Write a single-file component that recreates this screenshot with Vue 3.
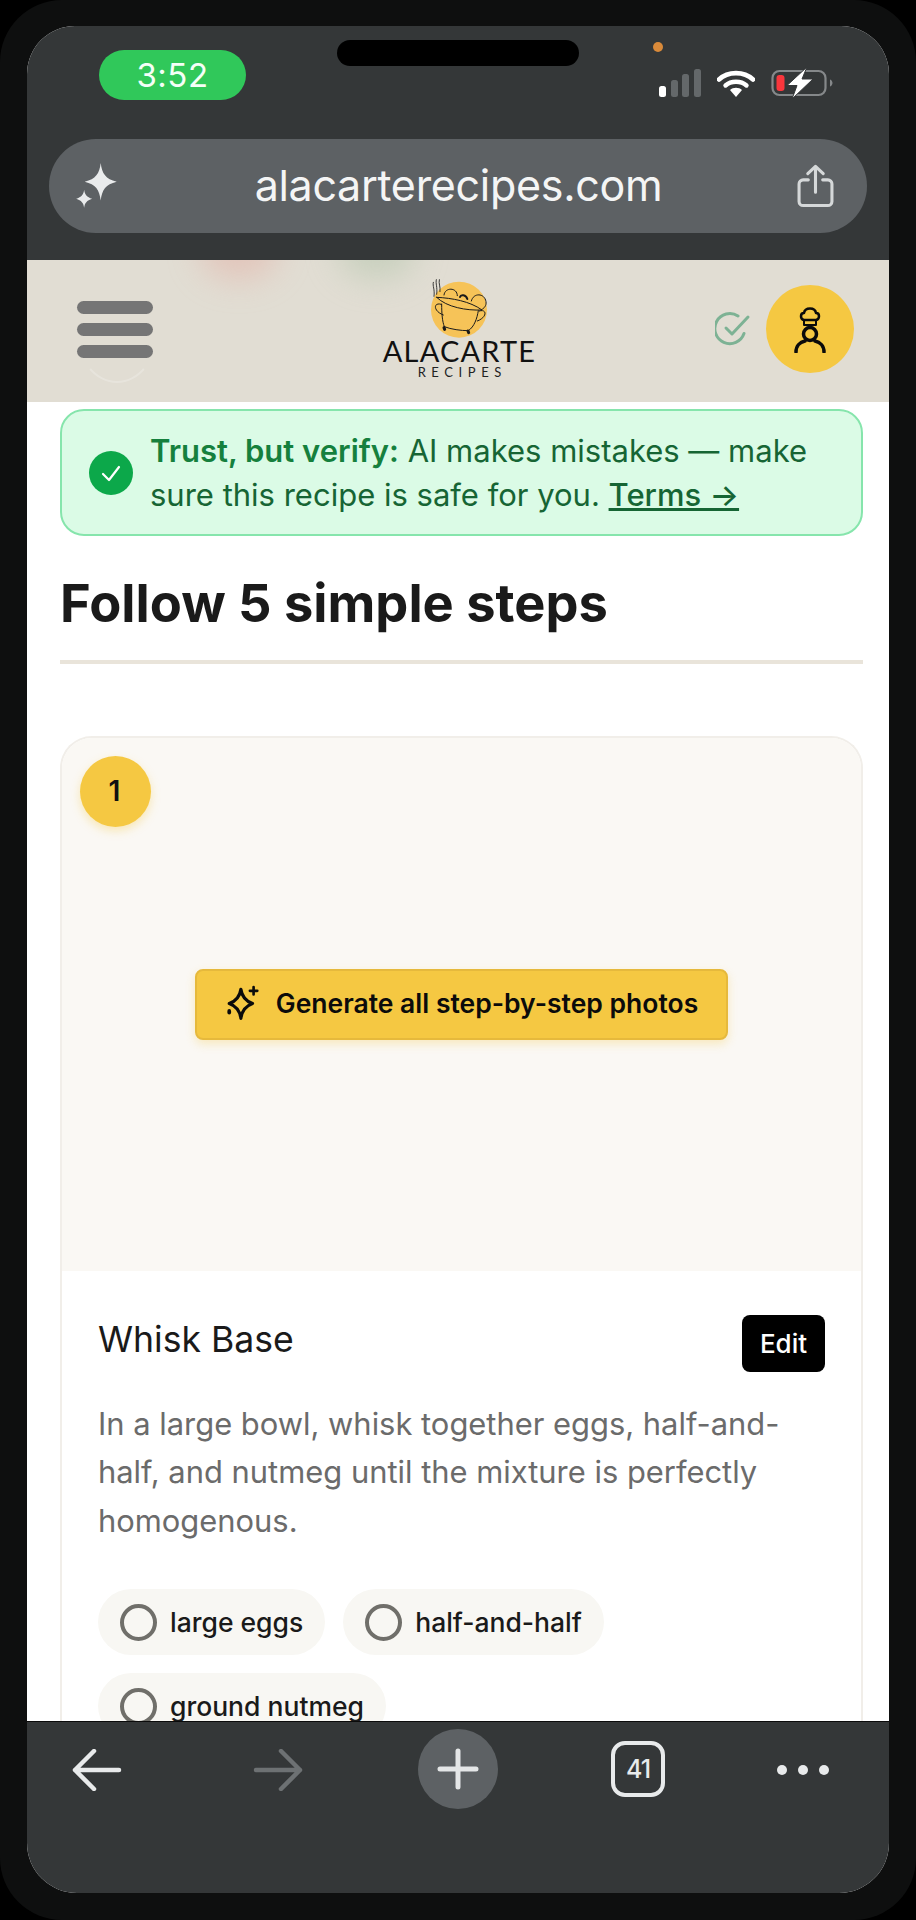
<script setup>
// ingredient chips of the first step
const ingredients = ['large eggs', 'half-and-half', 'ground nutmeg']
</script>

<template>
  <div class="frame">
    <div class="screen">
      <!-- browser top -->
      <div class="chrome-top">
        <div class="status">
          <div class="time">3:52</div>
          <div class="island"></div>
          <div class="status-right">
            <span class="dot"></span>
            <div class="status-icons">
              <svg class="signal" width="42" height="28" viewBox="0 0 42 28">
                <rect x="0" y="17" width="7" height="11" rx="2.5" fill="#fff" />
                <rect x="12" y="11" width="7" height="17" rx="2.5" fill="#64686a" />
                <rect x="23" y="5" width="7" height="23" rx="2.5" fill="#64686a" />
                <rect x="35" y="0" width="7" height="28" rx="2.5" fill="#64686a" />
              </svg>
              <svg width="38" height="28" viewBox="0 0 38 28">
                <path d="M2 10.5C11 2 27 2 36 10.5" fill="none" stroke="#fff" stroke-width="4.6" stroke-linecap="round" />
                <path d="M8.5 16.5C14 11.5 24 11.5 29.5 16.5" fill="none" stroke="#fff" stroke-width="4.4" stroke-linecap="round" />
                <path d="M13 21C16 18 22 18 25 21L19 28Z" fill="#fff" />
              </svg>
              <svg width="62" height="32" viewBox="0 0 62 32">
                <rect x="1.5" y="4" width="53" height="24" rx="7" fill="none" stroke="#85888a" stroke-width="2.2" />
                <rect x="5.5" y="8" width="8" height="16" rx="3" fill="#f9363c" />
                <path d="M59 12.5c1.6.6 2.5 2 2.5 3.5s-.9 2.9-2.5 3.5Z" fill="#85888a" />
                <path d="M36 0 16 18.5h10L21 32l21-20H31Z" fill="#fff" stroke="#343738" stroke-width="1" />
              </svg>
            </div>
          </div>
        </div>
        <div class="urlbar">
          <svg width="43" height="47" viewBox="0 0 40 44" fill="#e9ebec">
            <path d="M23 0c1.2 10 4.6 15 15 17.5-10.4 2.500-13.800 7.500-15 17.500-1.200-10-4.600-15-15-17.500C18.400 15 21.800 10 23 0Z" />
            <path d="M7.500 25c.6 4.500 2.500 6.900 7.500 8.500-5 1.600-6.900 4-7.500 8.500-.6-4.500-2.500-6.900-7.500-8.500 5-1.600 6.900-4 7.500-8.500Z" />
          </svg>
          <span class="url">alacarterecipes.com</span>
          <svg width="37" height="44" viewBox="0 0 36 42" fill="none" stroke="#d5d8d9" stroke-width="3" stroke-linecap="round" stroke-linejoin="round">
            <path d="M11 15H6a4 4 0 0 0-4 4v17a4 4 0 0 0 4 4h24a4 4 0 0 0 4-4V19a4 4 0 0 0-4-4h-5" />
            <path d="M18 27V2M10.500 9 18 2l7.500 7" />
          </svg>
        </div>
      </div>

      <!-- page -->
      <div class="page">
        <header class="site-header">
          <span class="spot spot-red"></span>
          <span class="spot spot-green"></span>
          <span class="menu-ring"></span>
          <div class="menu-btn">
            <span></span><span></span><span></span>
          </div>
          <div class="logo">
            <svg width="60" height="60" viewBox="240 55 180 180" fill="none" stroke="#1a1a1a" stroke-width="3" stroke-linecap="round" stroke-linejoin="round">
              <circle cx="327" cy="150" r="84" fill="#f6c358" stroke="none" />
              <path d="M250 68c-3 12 5 20 2 42M259 60c-3 12 4 22 1 44M268 60c-3 12 4 20 2 36" stroke-width="2.500" />
              <path d="M282 106c2-24 40-24 40 2M364 124c6-26 40-24 44 2 2 12-6 20-13 24" />
              <path d="M260 113c46 2 100 12 136 38-46 2-106-8-136-38Z" />
              <path d="M330 112c2-8 18-8 22 6" stroke-width="6" />
              <path d="M275 133c0 30 2 52 8 68 20 8 50 12 72 12 18-12 26-36 30-60" />
              <path d="M274 134c-24-8-26 20 6 32M388 154c22-8 26 18-6 30" />
              <path d="M282 204l2 5M354 214l2 5" stroke-width="9" />
            </svg>
            <div class="logo-name">ALACARTE</div>
            <div class="logo-sub">RECIPES</div>
          </div>
          <div class="header-right">
            <svg width="36" height="34" viewBox="0 0 36 34" fill="none" stroke="#7db294" stroke-width="3" stroke-linecap="round" stroke-linejoin="round">
              <path d="M29 21.500A15 15 0 1 1 23 4" />
              <path d="M11 16l6 6L33 5" />
            </svg>
            <div class="avatar">
              <svg width="32" height="48" viewBox="0 0 32 48" fill="none" stroke="#0b0b0b" stroke-width="2.500" stroke-linecap="round" stroke-linejoin="round">
                <path d="M10 15c-4-1-4-7 0-7 1-6 11-6 12 0 4 0 4 6 0 7Z" />
                <path d="M10 15v5h12v-5" stroke-width="2" />
                <circle cx="16" cy="29" r="6.500" stroke-width="3.500" />
                <path d="M2 47c0-6 4-10 9-11M30 47c0-6-4-10-9-11" stroke-width="3.500" />
              </svg>
            </div>
          </div>
        </header>

        <main class="content">
          <div class="notice">
            <span class="notice-check">
              <svg width="22" height="18" viewBox="0 0 22 18" fill="none" stroke="#fff" stroke-width="2.200" stroke-linecap="round" stroke-linejoin="round">
                <path d="M3 10l6 6L19 3" />
              </svg>
            </span>
            <p><strong>Trust, but verify:</strong> AI makes mistakes — make sure this recipe is safe for you. <a class="terms">Terms →</a></p>
          </div>

          <h2 class="steps-title">Follow 5 simple steps</h2>

          <section class="step">
            <div class="step-photo">
              <span class="step-num">1</span>
              <button class="gen-btn">
                <svg width="36" height="36" viewBox="0 0 34 34" fill="none" stroke="#0b0b0b" stroke-width="3" stroke-linecap="round" stroke-linejoin="round">
                  <path d="M15 4c1 7 4 11 11 13.500-7 2.500-10 6.500-11 14-1-7.500-4-11.500-11-14C11 15 14 11 15 4Z" />
                  <path d="M27 2v7M23.500 5.500h7" stroke-width="2.500" />
                  <path d="M4 24.500v1.500" stroke-width="3.500" />
                </svg>
                Generate all step-by-step photos
              </button>
            </div>
            <div class="step-body">
              <div class="step-head">
                <h3>Whisk Base</h3>
                <button class="edit-btn">Edit</button>
              </div>
              <p class="step-text">In a large bowl, whisk together eggs, half-and-half, and nutmeg until the mixture is perfectly homogenous.</p>
              <div class="chips">
                <div v-for="item in ingredients" :key="item" class="chip">
                  <span class="radio"></span>{{ item }}
                </div>
              </div>
            </div>
          </section>
        </main>
      </div>

      <!-- browser bottom -->
      <nav class="chrome-bottom">
        <svg width="50" height="42" viewBox="0 0 50 42" fill="none" stroke="#e8eaeb" stroke-width="4.500" stroke-linecap="round" stroke-linejoin="round">
          <path d="M47 21H3M22 2 3 21l19 19" />
        </svg>
        <svg width="50" height="42" viewBox="0 0 50 42" fill="none" stroke="#6d7173" stroke-width="4.500" stroke-linecap="round" stroke-linejoin="round">
          <path d="M3 21h44M28 2l19 19-19 19" />
        </svg>
        <span class="plus">
          <svg width="42" height="42" viewBox="0 0 42 42" fill="none" stroke="#e4e6e7" stroke-width="5" stroke-linecap="round">
            <path d="M21 3v36M3 21h36" />
          </svg>
        </span>
        <span class="tabs">41</span>
        <span class="more"><i></i><i></i><i></i></span>
      </nav>
    </div>
  </div>
</template>

<style>
html, body {
  background: #000;
}
</style>

<style scoped>
.frame {
  width: 916px;
  height: 1920px;
  box-sizing: border-box;
  padding: 26px 27px 27px;
  background: #0e0f0f;
  border-radius: 62px;
  font-family: Inter, "Liberation Sans", sans-serif;
}
.screen {
  height: 100%;
  display: flex;
  flex-direction: column;
  overflow: hidden;
  background: #fff;
  border-radius: 48px 48px 50px 50px;
}

/* top chrome */
.chrome-top {
  height: 234px;
  flex: none;
  background: #343738;
  box-sizing: border-box;
  padding: 14px 22px 0;
}
.status {
  display: flex;
  align-items: flex-start;
  height: 99px;
}
.time {
  width: 147px;
  height: 50px;
  margin: 10px 0 0 50px;
  border-radius: 25px;
  background: #30c85a;
  color: #f4fff7;
  font-size: 33px;
  line-height: 50px;
  text-align: center;
  letter-spacing: 0.5px;
}
.island {
  width: 242px;
  height: 26px;
  margin-left: 91px;
  border-radius: 13px;
  background: #000;
}
.status-right {
  margin-left: 80px;
  display: flex;
  flex-direction: column;
}
.dot {
  width: 10px;
  height: 10px;
  border-radius: 50%;
  background: #d98a3a;
  margin: 2px 0 0 -6px;
}
.status-icons {
  display: flex;
  align-items: center;
  gap: 16px;
  margin-top: 15px;
}
.urlbar {
  height: 94px;
  border-radius: 47px;
  background: #5d6164;
  display: flex;
  align-items: center;
  justify-content: space-between;
  padding: 0 33px 0 27px;
}
.url {
  color: #f4f5f5;
  font-size: 43px;
  line-height: 50px;
  letter-spacing: -0.3px;
  margin: 0 0 2px 1px;
}

/* page */
.page {
  flex: 1;
  min-height: 0;
  overflow: hidden;
}
.site-header {
  position: relative;
  height: 142px;
  box-sizing: border-box;
  background: #e1ddd3;
  display: grid;
  grid-template-columns: 1fr auto 1fr;
  align-items: start;
  overflow: hidden;
}
.spot {
  position: absolute;
  top: -40px;
  width: 80px;
  height: 60px;
  border-radius: 50%;
  filter: blur(16px);
  opacity: 0.6;
}
.spot-red {
  left: 172px;
  background: #e3b6ab;
}
.spot-green {
  left: 310px;
  background: #b8c8b0;
}
/* only the lower edge of this ring shows under the bars */
.menu-ring {
  position: absolute;
  left: 49px;
  top: 20px;
  width: 82px;
  height: 103px;
  box-sizing: border-box;
  border: 2px solid transparent;
  border-bottom-color: rgba(255, 255, 255, 0.22);
  border-radius: 50%;
}
.menu-btn {
  position: relative;
  width: 76px;
  margin: 41px 0 0 50px;
  display: flex;
  flex-direction: column;
  gap: 9px;
}
.menu-btn span {
  height: 13px;
  border-radius: 7px;
  background: #757575;
}
.logo {
  position: relative;
  margin-top: 18px;
  padding-left: 3px;
  display: flex;
  flex-direction: column;
  align-items: center;
}
.logo-name {
  margin-top: -2px;
  font-family: Lato, sans-serif;
  font-size: 29px;
  line-height: 29px;
  letter-spacing: 1.2px;
  color: #111;
}
.logo-sub {
  font-family: Lato, sans-serif;
  font-size: 13px;
  line-height: 14px;
  letter-spacing: 5.6px;
  margin-right: -5.6px;
  color: #222;
}
.header-right {
  position: relative;
  display: flex;
  justify-content: flex-end;
  align-items: center;
  gap: 15px;
  padding: 25px 35px 0 0;
}
.avatar {
  width: 88px;
  height: 88px;
  border-radius: 50%;
  background: #f5c842;
  display: flex;
  align-items: center;
  justify-content: center;
}

.content {
  padding: 7px 26px 0 33px;
}
.notice {
  display: flex;
  align-items: center;
  gap: 17px;
  height: 127px;
  box-sizing: border-box;
  padding: 0 6px 0 27px;
  background: #dbfbe6;
  border: 2px solid #86e5ac;
  border-radius: 24px;
}
.notice p {
  margin: 0;
  font-size: 31px;
  line-height: 44px;
  color: #166534;
}
.notice strong {
  font-weight: 600;
  color: #15803d;
}
.terms {
  font-weight: 500;
  text-decoration: underline;
}
.notice-check {
  flex: none;
  width: 44px;
  height: 44px;
  border-radius: 50%;
  background: #0ca84a;
  display: flex;
  align-items: center;
  justify-content: center;
}
.steps-title {
  margin: 37px 0 0;
  padding-bottom: 27px;
  border-bottom: 4px solid #e9e4da;
  font-size: 52.4px;
  line-height: 60px;
  font-weight: 700;
  color: #1a1a1a;
}
.step {
  margin-top: 72px;
  border: 2px solid #f1eee9;
  border-bottom: 0;
  border-radius: 32px 32px 0 0;
  overflow: hidden;
}
.step-photo {
  position: relative;
  height: 533px;
  background: #faf8f4;
  display: flex;
  align-items: center;
  justify-content: center;
}
.step-num {
  position: absolute;
  left: 18px;
  top: 18px;
  width: 71px;
  height: 71px;
  box-sizing: border-box;
  padding: 0 2px 2px 0;
  border-radius: 50%;
  background: #f5c842;
  box-shadow: 0 4px 10px rgba(245, 200, 66, 0.35);
  display: flex;
  align-items: center;
  justify-content: center;
  font-size: 28px;
  font-weight: 600;
  color: #111;
}
.gen-btn {
  height: 71px;
  width: 533px;
  padding: 0 0 3px;
  border: 2px solid #e6b93c;
  border-radius: 8px;
  background: #f5c842;
  box-shadow: 0 4px 10px rgba(245, 200, 66, 0.3);
  display: flex;
  align-items: center;
  justify-content: center;
  gap: 15px;
  font-family: inherit;
  font-size: 26.5px;
  font-weight: 600;
  color: #0b0b0b;
}
.step-body {
  padding: 44px 36px 0 36px;
}
.step-head {
  display: flex;
  align-items: flex-start;
  justify-content: space-between;
}
.step-head h3 {
  margin: 1px 0 0;
  font-size: 35.6px;
  line-height: 48px;
  font-weight: 400;
  color: #1a1a1a;
}
.edit-btn {
  width: 83px;
  height: 57px;
  border: 0;
  border-radius: 8px;
  background: #000;
  color: #fff;
  font-family: inherit;
  font-size: 26px;
  font-weight: 500;
}
.step-text {
  margin: 27.5px 0 0;
  font-size: 30.9px;
  line-height: 48.5px;
  color: #6b6b6b;
}
.chips {
  margin-top: 44px;
  display: flex;
  flex-wrap: wrap;
  gap: 18px;
}
.chip {
  height: 66px;
  box-sizing: border-box;
  padding: 0 22px;
  border-radius: 33px;
  background: #f8f7f3;
  display: flex;
  align-items: center;
  gap: 13px;
  font-size: 26.5px;
  font-weight: 500;
  color: #1a1a1a;
}
.radio {
  width: 37px;
  height: 37px;
  box-sizing: border-box;
  border: 4px solid #706f6a;
  border-radius: 50%;
}

/* bottom chrome */
.chrome-bottom {
  height: 172px;
  flex: none;
  box-sizing: border-box;
  background: #343738;
  border-top: 1px solid #0b0b0b;
  display: grid;
  grid-template-columns: 140px 222px 138px 222px 108px;
  justify-items: center;
  align-items: start;
  padding-top: 7px;
}
.chrome-bottom > svg {
  margin-top: 20px;
}
.plus {
  width: 80px;
  height: 80px;
  border-radius: 50%;
  background: #5d6164;
  display: flex;
  align-items: center;
  justify-content: center;
}
.tabs {
  width: 54px;
  height: 56px;
  margin-top: 12px;
  box-sizing: border-box;
  border: 4px solid #e8eaeb;
  border-radius: 14px;
  display: flex;
  align-items: center;
  justify-content: center;
  color: #e8eaeb;
  font-size: 25px;
  font-weight: 500;
  letter-spacing: -1px;
}
.more {
  display: flex;
  gap: 11px;
  margin-top: 36px;
}
.more i {
  width: 10px;
  height: 10px;
  border-radius: 50%;
  background: #e8eaeb;
}
</style>
